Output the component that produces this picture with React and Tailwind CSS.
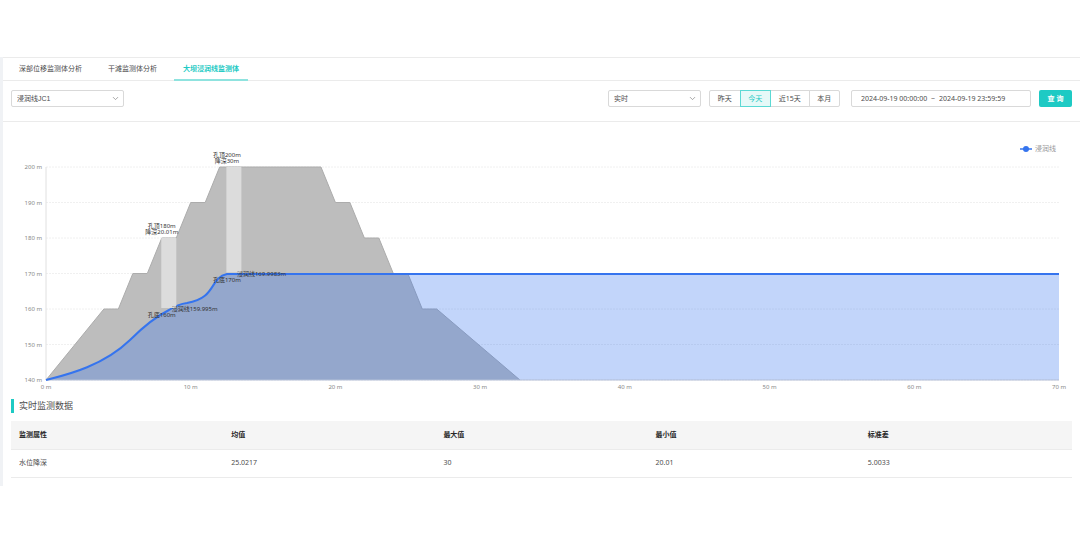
import { useState } from 'react';
import { FiChevronDown } from 'react-icons/fi';
import clsx from 'clsx';

const TABS = ['深部位移监测体分析', '干滩监测体分析', '大坝浸润线监测体'];
const RANGES = ['昨天', '今天', '近15天', '本月'];
const COLUMNS = ['监测属性', '均值', '最大值', '最小值', '标准差'];
const ROWS = [['水位降深', '25.0217', '30', '20.01', '5.0033']];

// Chart plot area, in viewBox units
const LEFT = 43;
const RIGHT = 1056;
const TOP = 45;
const BOTTOM = 258;

const sx = (m) => LEFT + (m / 70) * (RIGHT - LEFT);
const sy = (m) => BOTTOM - ((m - 140) / 60) * (BOTTOM - TOP);

const DAM = [
  [0, 140], [4, 160], [5, 160], [6, 170], [7, 170], [8, 180], [9, 180],
  [10, 190], [11, 190], [12, 200], [19, 200], [20, 190], [21, 190],
  [22, 180], [23, 180], [24, 170], [25, 170], [26, 160], [27, 160], [32.75, 140],
];

const HOLES = [
  { x: 8, top: 180, bottom: 160, depth: '20.01', water: '159.995' },
  { x: 12.5, top: 200, bottom: 170, depth: '30', water: '169.9983' },
];

const WATER_LINE =
  'M43 258 C58 254 98 246 127 218 C140 205 154 194 166 188 C172 184 176 182 184 181 C214 176 206 156 224 152 L1056 152';

const Select = ({ label, options, className }) => (
  <div className={clsx('relative', className)}>
    <select
      aria-label={label}
      className="h-[17px] w-full appearance-none rounded-xs border border-[#d9d9d9] bg-white pl-[5px] pr-4 font-['Liberation_Sans','Noto_Sans_CJK_SC',sans-serif] text-[7px] leading-[15px] text-[#4d4d4d] outline-none"
    >
      {options.map((o) => (
        <option key={o}>{o}</option>
      ))}
    </select>
    <FiChevronDown className="pointer-events-none absolute right-1 top-1 h-[9px] w-[9px] text-[#8c8c8c]" />
  </div>
);

const SeepageChart = () => {
  const dam = DAM.map(([x, y]) => `${sx(x)},${sy(y)}`).join(' ');

  return (
    <svg viewBox="0 0 1077 273" className="block w-full" role="img" aria-label="浸润线">
      {/* Grid and y axis */}
      {[140, 150, 160, 170, 180, 190, 200].map((v) => (
        <g key={v}>
          <line x1={LEFT} x2={RIGHT} y1={sy(v)} y2={sy(v)} stroke="#f0f0f0" strokeDasharray="2 1" />
          <text x="39" y={sy(v) + 2} textAnchor="end" fontSize="6" fill="#888">{v} m</text>
        </g>
      ))}
      <line x1={LEFT} x2={LEFT} y1={TOP} y2={BOTTOM} stroke="#e0e0e0" />
      {[0, 10, 20, 30, 40, 50, 60, 70].map((v) => (
        <text key={v} x={sx(v)} y="267" textAnchor="middle" fontSize="6" fill="#888">{v} m</text>
      ))}

      {/* Dam body */}
      <polygon points={dam} fill="#bdbdbd" />
      <polyline points={dam} fill="none" stroke="#acacac" />

      {/* Water area */}
      <path d={`${WATER_LINE} L1056 258 L43 258 Z`} fill="#3574ee" fillOpacity="0.3" />
      <line x1={LEFT} x2={RIGHT} y1={BOTTOM} y2={BOTTOM} stroke="#b5c0d8" />
      <path d={WATER_LINE} fill="none" stroke="#3574ee" strokeWidth="2" />

      {/* Boreholes */}
      {HOLES.map((h) => (
        <rect key={h.x} x={sx(h.x) - 0.5} y={sy(h.top)} width="15" height={sy(h.bottom) - sy(h.top) - 1} fill="#dcdcdc" />
      ))}
      {HOLES.map((h) => (
        <g key={h.x} fontSize="6" fill="#333" textAnchor="middle">
          <text x={sx(h.x)} y={sy(h.top) - 10}>孔顶{h.top}m</text>
          <text x={sx(h.x)} y={sy(h.top) - 4}>降深{h.depth}m</text>
          <text x={sx(h.x)} y={sy(h.bottom) + 8}>孔底{h.bottom}m</text>
          <text x={sx(h.x) + 10} y={sy(h.bottom) + 2} textAnchor="start">浸润线{h.water}m</text>
        </g>
      ))}

      {/* Legend */}
      <line x1="1017" x2="1029" y1="27" y2="27" stroke="#3574ee" strokeWidth="1.5" />
      <circle cx="1023" cy="27" r="3" fill="#3574ee" />
      <text x="1032" y="29" fontSize="7" fill="#999">浸润线</text>
    </svg>
  );
};

const App = () => {
  const [tab, setTab] = useState(TABS[2]);
  const [range, setRange] = useState('今天');
  const [start, setStart] = useState('2024-09-19 00:00:00');
  const [end, setEnd] = useState('2024-09-19 23:59:59');

  return (
    <div className="min-h-screen bg-white pt-[57px] font-['Noto_Sans','Noto_Sans_CJK_SC',sans-serif] text-[7px] leading-[10px] text-[#4d4d4d]">
      <main className="border-l-3 border-[#f0f2f5] pb-2">
        {/* Tabs */}
        <nav className="flex h-6 gap-2 border-y border-[#ebebeb] pl-[7px]">
          {TABS.map((name) => (
            <button
              key={name}
              type="button"
              onClick={() => setTab(name)}
              className={clsx(
                '-mb-px border-b-2 px-[9px]',
                tab === name ? 'border-[#8fe3df] font-bold text-[#1ecac4]' : 'border-transparent'
              )}
            >
              {name}
            </button>
          ))}
        </nav>

        {/* Filters */}
        <div className="flex h-[41px] items-start border-b border-[#ebebeb] px-2 pt-[9px]">
          <Select label="监测体" options={['浸润线JC1']} className="w-[113px]" />
          <div className="ml-auto flex items-center">
            <Select label="数据类型" options={['实时']} className="w-[93px]" />
            <div className="ml-2 flex w-[131px]">
              {RANGES.map((r) => (
                <button
                  key={r}
                  type="button"
                  onClick={() => setRange(r)}
                  className={clsx(
                    '-mr-px h-[17px] flex-auto border px-1 first:rounded-l-xs last:mr-0 last:rounded-r-xs',
                    range === r
                      ? 'relative border-[#5cd9d4] bg-[#e6f9f8] text-[#1ecac4]'
                      : 'border-[#d9d9d9] bg-white'
                  )}
                >
                  {r}
                </button>
              ))}
            </div>
            <div className="ml-[11px] flex h-[17px] w-[180px] items-center rounded-xs border border-[#d9d9d9] px-[9px]">
              <input aria-label="开始时间" value={start} onChange={(e) => setStart(e.target.value)} className="w-[70px] outline-none" />
              <span className="w-2">~</span>
              <input aria-label="结束时间" value={end} onChange={(e) => setEnd(e.target.value)} className="w-[70px] outline-none" />
            </div>
            <button type="button" className="ml-2 h-[17px] w-[33px] rounded-xs bg-[#1ecac4] font-bold text-white">
              查 询
            </button>
          </div>
        </div>

        <SeepageChart />

        {/* Statistics */}
        <section className="px-2 pt-1">
          <h2 className="flex items-center gap-[5px] text-[9px] leading-[14px]">
            <span className="h-[14px] w-[3px] bg-[#1ecac4]" />
            实时监测数据
          </h2>
          <table className="mt-2 w-full table-fixed text-left">
            <thead>
              <tr className="h-7 border-b border-[#ebebeb] bg-[#f5f5f5] text-[#262626]">
                {COLUMNS.map((c) => (
                  <th key={c} className="px-2 font-bold">{c}</th>
                ))}
              </tr>
            </thead>
            <tbody>
              {ROWS.map((row) => (
                <tr key={row[0]} className="h-7 border-b border-[#ebebeb]">
                  {row.map((cell) => (
                    <td key={cell} className="px-2">{cell}</td>
                  ))}
                </tr>
              ))}
            </tbody>
          </table>
        </section>
      </main>
    </div>
  );
};

export default App;
